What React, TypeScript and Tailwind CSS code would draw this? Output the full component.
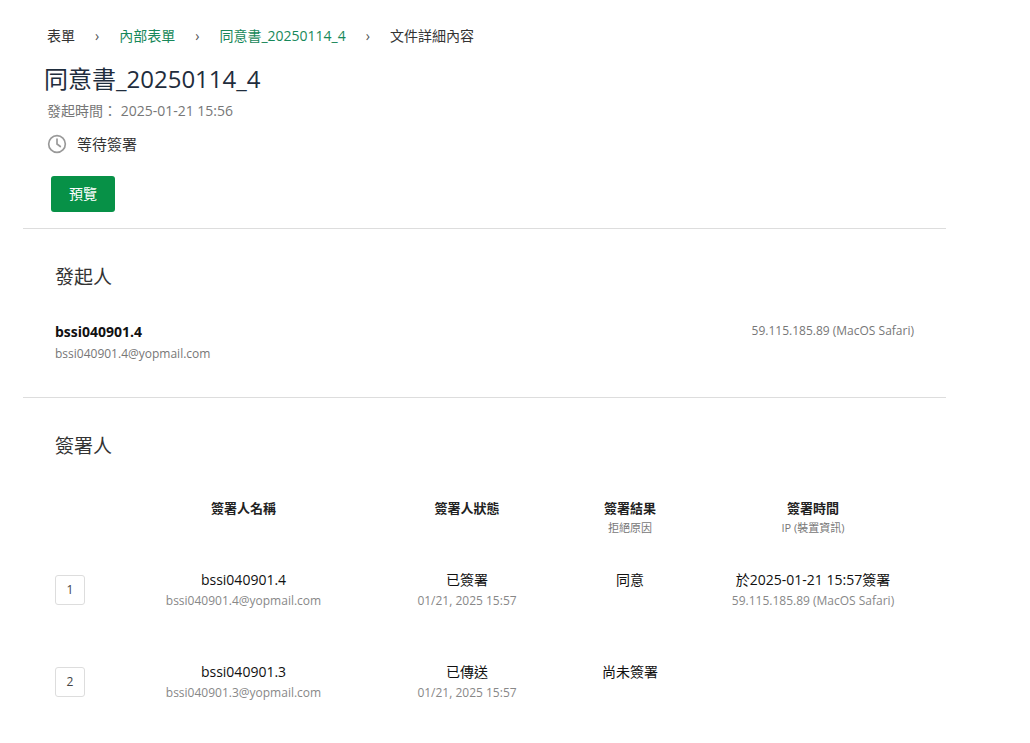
import React from "react";

const F = { fontFamily: '"Open Sans", "Noto Sans CJK TC", sans-serif' };

const rows = [
  { n: "1", name: "bssi040901.4", mail: "bssi040901.4@yopmail.com", st: "已簽署", t: "01/21, 2025 15:57", res: "同意", time: "於2025-01-21 15:57簽署", ip: "59.115.185.89 (MacOS Safari)" },
  { n: "2", name: "bssi040901.3", mail: "bssi040901.3@yopmail.com", st: "已傳送", t: "01/21, 2025 15:57", res: "尚未簽署", time: "", ip: "" },
];

export default function App() {
  return (
    <div style={F} className="w-[1030px] h-[743px] bg-white text-[#222] overflow-hidden">
      <div className="w-[923px] ml-[23px]">
        <div className="pl-[24px] pt-[26px]">
          <div className="flex items-center text-[14px] gap-[20px] h-[18px]">
            <span className="text-[#333]">表單</span>
            <span className="text-[#555]">›</span>
            <span className="text-[#17885a]">內部表單</span>
            <span className="text-[#555]">›</span>
            <span className="text-[#17885a]">同意書_20250114_4</span>
            <span className="text-[#555]">›</span>
            <span className="text-[#333]">文件詳細內容</span>
          </div>
          <h1 className="text-[24px] text-[#1f2d3d] mt-[20px] leading-[30px] -ml-[3px]">同意書_20250114_4</h1>
          <div className="text-[14px] text-[#777] mt-[6px]">發起時間： 2025-01-21 15:56</div>
          <div className="flex items-center gap-[10px] mt-[12px] text-[15px] text-[#333]">
            <svg width="20" height="20" viewBox="0 0 24 24" fill="none" stroke="#999" strokeWidth="2" strokeLinecap="round"><circle cx="12" cy="12" r="10" /><path d="M12 6v6l4 3" /></svg>
            等待簽署
          </div>
          <button className="mt-[20px] ml-[4px] w-[64px] h-[36px] rounded-[3px] bg-[#079147] text-white text-[14px]">預覽</button>
        </div>
        <div className="border-t border-[#ddd] mt-[16px]" />
        <div className="px-[32px] pt-[34px] pb-[34px]">
          <h2 className="text-[19px] text-[#333]">發起人</h2>
          <div className="flex justify-between mt-[30px]">
            <div>
              <div className="text-[14px] font-bold text-[#111]">bssi040901.4</div>
              <div className="text-[12px] text-[#777] mt-[3px]">bssi040901.4@yopmail.com</div>
            </div>
            <div className="text-[12px] text-[#777] mr-[0px] mt-[1px]">59.115.185.89 (MacOS Safari)</div>
          </div>
        </div>
        <div className="border-t border-[#ddd]" />
        <div className="px-[32px] pt-[34px]">
          <h2 className="text-[19px] text-[#333]">簽署人</h2>
          <div className="grid grid-cols-[30px_317px_130px_196px_170px] mt-[38px] text-center">
            <div />
            <div className="text-[13px] font-bold">簽署人名稱</div>
            <div className="text-[13px] font-bold">簽署人狀態</div>
            <div>
              <div className="text-[13px] font-bold">簽署結果</div>
              <div className="text-[11px] text-[#777] mt-[2px]">拒絕原因</div>
            </div>
            <div>
              <div className="text-[13px] font-bold">簽署時間</div>
              <div className="text-[11px] text-[#777] mt-[2px]">IP (裝置資訊)</div>
            </div>
          </div>
          {rows.map((r) => (
            <div key={r.n} className="grid grid-cols-[30px_317px_130px_196px_170px] text-center mt-[32px] h-[60px] items-start">
              <div className="w-[30px] h-[30px] mt-[6px] border border-[#ddd] rounded-[3px] flex items-center justify-center text-[12px] text-[#444]">{r.n}</div>
              <div>
                <div className="text-[14px] text-[#111]">{r.name}</div>
                <div className="text-[12px] text-[#888] mt-[2px]">{r.mail}</div>
              </div>
              <div>
                <div className="text-[14px] text-[#111]">{r.st}</div>
                <div className="text-[12px] text-[#888] mt-[2px]">{r.t}</div>
              </div>
              <div className="text-[14px] text-[#111]">{r.res}</div>
              <div>
                <div className="text-[14px] text-[#111]">{r.time}</div>
                <div className="text-[12px] text-[#888] mt-[2px]">{r.ip}</div>
              </div>
            </div>
          ))}
        </div>
      </div>
    </div>
  );
}
